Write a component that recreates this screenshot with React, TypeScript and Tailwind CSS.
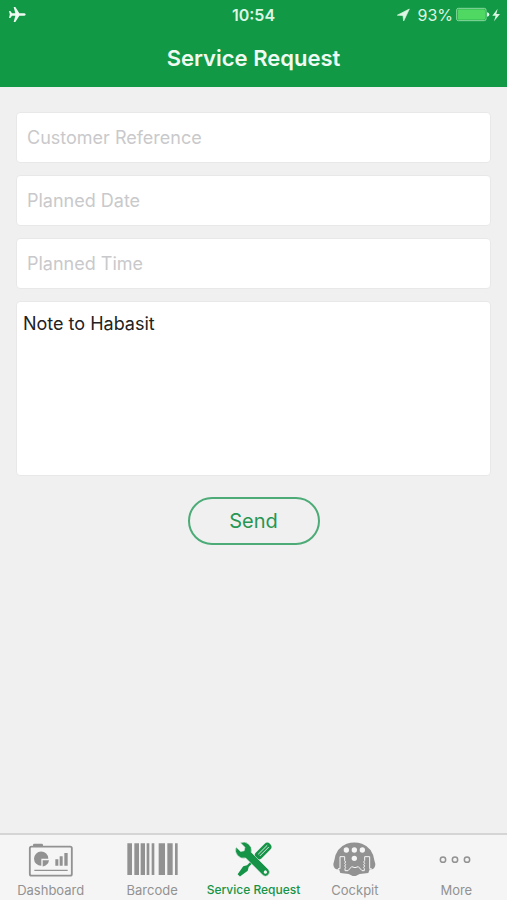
import type { ReactNode } from "react";

function AirplaneIcon() {
  return (
    <svg className="h-[17px] w-[19px]" viewBox="24 18 57 51" fill="currentColor" aria-hidden="true">
      <path d="M77 43.500c0-2.500-3-4-7-4H58L46 21h-5l5 18.500H36L31 33h-4l2.500 10.500L27 54h4l5-6.500h10L41 66h5l12-18.500h12c4 0 7-1.500 7-4z" />
    </svg>
  );
}

function LocationIcon() {
  return (
    <svg
      className="h-[14px] w-[13px]"
      viewBox="54 22 39 42"
      fill="currentColor"
      stroke="currentColor"
      strokeWidth="2"
      strokeLinejoin="round"
      aria-hidden="true"
    >
      <path d="M91 25 55 43.500l17 1L74 61z" />
    </svg>
  );
}

function BatteryIcon() {
  return (
    <svg className="h-[15px] w-[34px]" viewBox="227 21 102 45" aria-hidden="true">
      <rect x="229" y="25" width="88" height="37" rx="5" fill="none" stroke="#a5e9b1" strokeWidth="2.500" />
      <rect x="232" y="28" width="82" height="31" rx="3" fill="#4fd862" />
      <path d="M320 37q7 1 7 6.500t-7 6.500z" fill="#e5fae9" />
    </svg>
  );
}

function BoltIcon() {
  return (
    <svg className="h-[14px] w-[9px]" viewBox="338 23 27 42" fill="currentColor" aria-hidden="true">
      <path d="M355 25 339 46h10l-5 17 18-22H351z" />
    </svg>
  );
}

const tabIcon = "h-9 w-[54px]";

function DashboardIcon() {
  return (
    <svg className={tabIcon} viewBox="71 51 162 108" aria-hidden="true">
      <path d="M98 64v-4q0-4 4-4h22q4 0 4 4v4z" fill="currentColor" />
      <rect x="88.500" y="65" width="126" height="87" rx="5" fill="none" stroke="currentColor" strokeWidth="5.500" />
      <path d="M123 101h21A21.500 21.500 0 1 0 123 122.500z" fill="currentColor" />
      <path d="M127 105.500h19q-2 15-19 19z" fill="currentColor" />
      <path d="M165 103h9v19h-9zM178 94h9v28h-9zM192 84h10v38h-10z" fill="currentColor" />
      <path d="M102 136h100" stroke="currentColor" strokeWidth="4" />
    </svg>
  );
}

function BarcodeIcon() {
  return (
    <svg className={tabIcon} viewBox="75 51 162 108" fill="currentColor" aria-hidden="true">
      <path d="M82 55h14v95H82zM103 55h14v95h-14zM122 55h13v95h-13zM140 55h8v95h-8zM155 55h8v95h-8zM176 55h19v95h-19zM202 55h16v95h-16zM225 55h8v95h-8z" />
    </svg>
  );
}

function ServiceIcon() {
  return (
    <svg className={tabIcon} viewBox="80 51 162 108" aria-hidden="true">
      <g transform="rotate(45 165 103)">
        <path d="M154 48q0-11 12-11t12 11v38q0 8-8 10h-8q-8-2-8-10z" fill="currentColor" />
        <path d="M162.500 47v36M169.500 47v36" stroke="#f5f5f5" strokeWidth="2.500" strokeLinecap="round" />
        <path d="M162 90h7v41l6 10-4 29h-10l-5-29 6-10z" fill="currentColor" />
      </g>
      <g transform="translate(160 103) rotate(-45)">
        <path
          d="M-9-61V-42L0-36L9-42V-61A24 24 0 0 1 12-18V54A12 12 0 0 1-12 54V-18A24 24 0 0 1-9-61z"
          fill="currentColor"
          stroke="#f5f5f5"
          strokeWidth="1.500"
        />
        <circle cx="0" cy="54" r="5" fill="#f5f5f5" />
      </g>
    </svg>
  );
}

function CockpitIcon() {
  return (
    <svg className={tabIcon} viewBox="54 51 162 108" aria-hidden="true">
      <path
        d="M73 106q5-38 37-50 23-7 46 0 32 12 37 50l3 11q0 12-9 16h-8l-4 11-26 3-12 6h-9l-12-6-25-3-4-11h-8q-9-4-9-16z"
        fill="currentColor"
      />
      <g fill="#f5f5f5">
        <circle cx="109" cy="75" r="8" />
        <circle cx="133" cy="75" r="8" />
        <circle cx="157" cy="75" r="8" />
        <circle cx="133" cy="100" r="8" />
      </g>
      <g fill="none" stroke="#f5f5f5" strokeWidth="3" strokeLinejoin="round">
        <path d="M84 131h6V95h14v12l3 4-3 4 3 4-3 4 3 4-2 4v6h9l11-12q10 6 20 0l11 12h7v-6l-2-4 3-4-3-4 3-4-3-4 3-4V95h15v36h6" />
      </g>
    </svg>
  );
}

function MoreIcon() {
  return (
    <svg className={tabIcon} viewBox="67 51 162 108" fill="none" stroke="currentColor" strokeWidth="4.500" aria-hidden="true">
      <circle cx="109" cy="104" r="8" />
      <circle cx="145" cy="104" r="8" />
      <circle cx="181" cy="104" r="8" />
    </svg>
  );
}

const tabs: { label: string; icon: ReactNode; active?: boolean }[] = [
  { label: "Dashboard", icon: <DashboardIcon /> },
  { label: "Barcode", icon: <BarcodeIcon /> },
  { label: "Service Request", icon: <ServiceIcon />, active: true },
  { label: "Cockpit", icon: <CockpitIcon /> },
  { label: "More", icon: <MoreIcon /> },
];

const field =
  "block w-full rounded-[4px] border border-[#e8e8e8] bg-white text-lg text-[#222] outline-none placeholder:text-[#c9c9cb]";

export default function App() {
  return (
    <div className="flex min-h-screen flex-col bg-[#f0f0f0] font-['Inter','Liberation_Sans',sans-serif]">
      <header className="bg-[#129945] text-[#effbf2]">
        <div className="grid h-[29px] grid-cols-[1fr_auto_1fr] items-center px-1 text-base">
          <div className="pl-1">
            <AirplaneIcon />
          </div>
          <time className="font-semibold text-[#dcf6e3]">10:54</time>
          <div className="flex items-center justify-end gap-[3px] pr-0.5 text-[#dcf6e3]">
            <LocationIcon />
            <span className="pl-1">93%</span>
            <div className="flex items-center gap-[2px]">
              <BatteryIcon />
              <BoltIcon />
            </div>
          </div>
        </div>
        <h1 className="flex h-[58px] items-center justify-center text-[22px] font-semibold">Service Request</h1>
      </header>

      <main className="grow px-4 pt-[25px]">
        <form className="flex flex-col gap-3" onSubmit={(e) => e.preventDefault()}>
          <input className={`${field} h-[51px] px-[10px]`} type="text" aria-label="Customer Reference" placeholder="Customer Reference" />
          <input className={`${field} h-[51px] px-[10px]`} type="text" aria-label="Planned Date" placeholder="Planned Date" />
          <input className={`${field} h-[51px] px-[10px]`} type="text" aria-label="Planned Time" placeholder="Planned Time" />
          <textarea className={`${field} h-[175px] resize-none px-[6px] py-2`} aria-label="Note" defaultValue="Note to Habasit" />
          <button
            className="mt-[9px] h-12 w-[132px] self-center rounded-full border-2 border-[#4cab76] text-xl text-[#279653]"
            type="submit"
          >
            Send
          </button>
        </form>
      </main>

      <nav className="grid h-[67px] grid-cols-5 border-t-2 border-[#d5d5d5] bg-[#f5f5f5]" aria-label="Main">
        {tabs.map(({ label, icon, active }) => (
          <a
            key={label}
            href="#"
            aria-current={active ? "page" : undefined}
            className={`flex flex-col items-center gap-1 whitespace-nowrap pt-[7px] leading-4 ${
              active ? "text-xs/4 font-medium text-[#159447]" : "text-[13px]/4 text-[#929292]"
            }`}
          >
            {icon}
            <span>{label}</span>
          </a>
        ))}
      </nav>
    </div>
  );
}
